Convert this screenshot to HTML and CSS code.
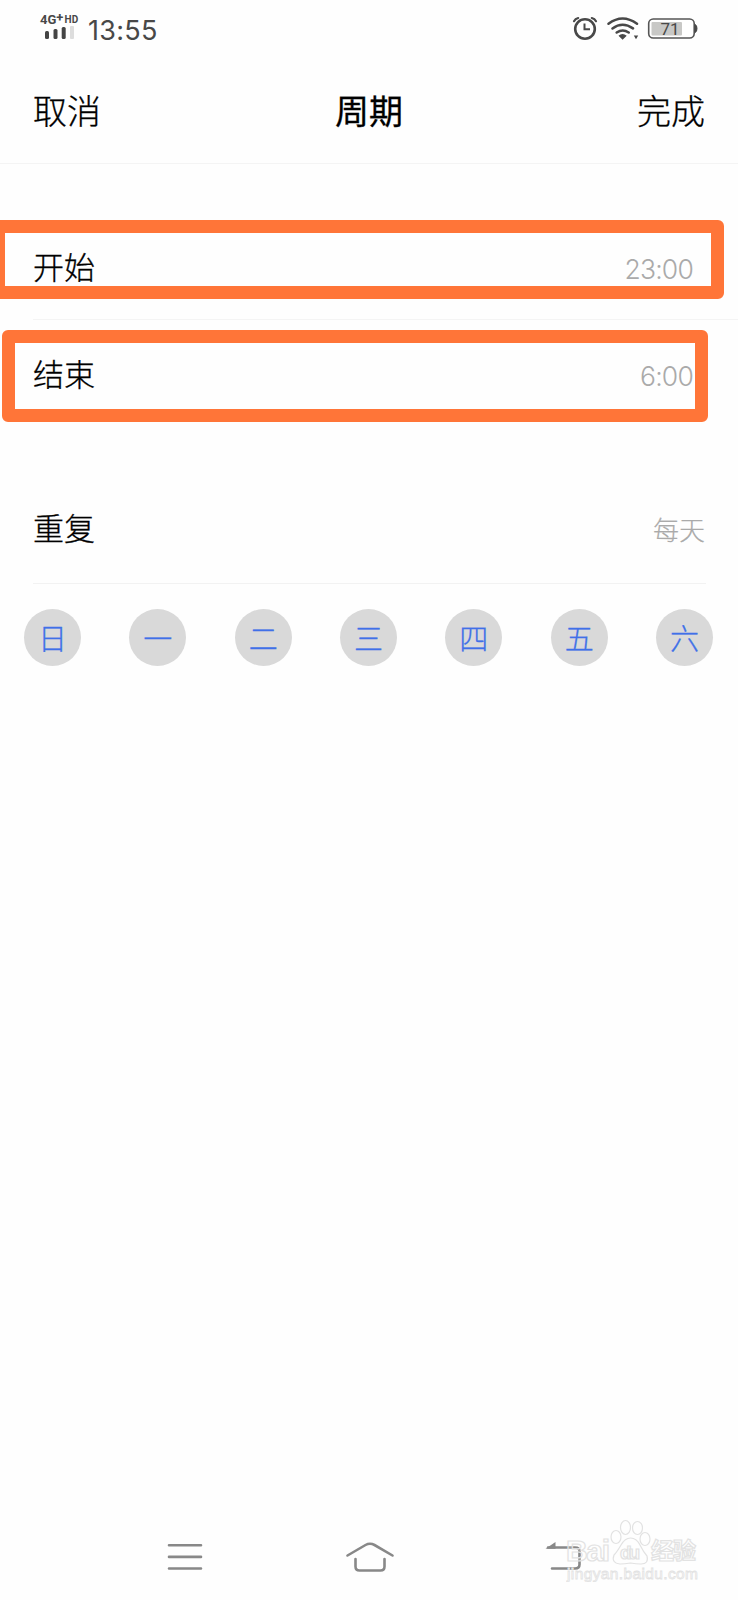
FILE: index.html
```html
<!DOCTYPE html>
<html lang="zh-CN">
<head>
    <meta charset="UTF-8">
    <meta name="viewport" content="width=device-width, initial-scale=1.0">
    <title>周期</title>
    <link rel="stylesheet" href="styles.css">
</head>
<body>
    <!-- Status bar -->
    <div class="status">
        <div class="network">
            <div class="network-type">4G<span class="plus">+</span><span class="hd">HD</span></div>
            <svg class="signal" width="30" height="13" viewBox="0 0 30 13">
                <rect x="0" y="5" width="4" height="8" rx="1.5" fill="#444"/>
                <rect x="8.5" y="3" width="4" height="10" rx="1.5" fill="#444"/>
                <rect x="16.7" y="1" width="4" height="12" rx="1.5" fill="#444"/>
                <rect x="25" y="0" width="4" height="13" rx="1" fill="#ddd"/>
            </svg>
        </div>
        <div class="time">13:55</div>
        <svg class="status-icons" width="130" height="28" viewBox="570 14 130 28">
            <g fill="none" stroke="#484848" stroke-linecap="round">
                <circle cx="585" cy="29" r="9.8" stroke-width="2.6"/>
                <path d="M584.5 23.5v5.7h5.5" stroke-width="2" stroke-linecap="butt"/>
                <path d="M574 21.2q1.3-2.5 4.2-3.2M596 21.2q-1.3-2.5-4.2-3.2" stroke-width="2.2"/>
                <path d="M608.5 23.7q14-10.5 28.5 0M612.5 28.4q10-7.2 20.5 0M616.7 32.5q6-4 12 0" stroke-width="2.5"/>
            </g>
            <path d="M618.5 35.8q4-3.6 8.2 0l-4.1 3.9zM633.8 35.5h4.4l-2.2 3.8z" fill="#484848"/>
            <rect x="648.7" y="19" width="45.5" height="19" rx="4.5" fill="#fff" stroke="#555" stroke-width="1.6"/>
            <rect x="651.5" y="22" width="30.5" height="13.5" rx="1" fill="#c8c8c6"/>
            <path d="M695 24.5q2 .5 2 4t-2 4z" fill="#484848" stroke="#484848"/>
            <text class="battery-text" x="670" y="35" text-anchor="middle">71</text>
        </svg>
    </div>

    <div class="header">
        <span>取消</span>
        <span class="title">周期</span>
        <span>完成</span>
    </div>

    <!-- Time period -->
    <div class="period">
        <div class="row start">
            <span>开始</span>
            <span class="value">23:00</span>
        </div>
        <div class="row end">
            <span>结束</span>
            <span class="value">6:00</span>
        </div>
        <div class="mark mark-start"></div>
        <div class="mark mark-end"></div>
    </div>

    <!-- Repeat days -->
    <div class="row repeat">
        <span>重复</span>
        <span class="repeat-value">每天</span>
    </div>
    <div class="days">
        <span class="day">日</span>
        <span class="day">一</span>
        <span class="day">二</span>
        <span class="day">三</span>
        <span class="day">四</span>
        <span class="day">五</span>
        <span class="day">六</span>
    </div>

    <!-- Navigation bar -->
    <div class="nav">
        <svg width="36" height="30" viewBox="0 0 36 30">
            <path d="M2 3.2h32M2 14.900h32M2 26.500h32"/>
        </svg>
        <svg class="home" width="50" height="32" viewBox="0 0 50 32">
            <path d="M2.5 14.500L20.500 4Q25 1.500 29.500 4L47.500 14.500M10.500 18v7.500q0 4 4 4h21q4 0 4-4v-7.500"/>
        </svg>
        <svg width="38" height="30" viewBox="0 0 38 30">
            <path d="M3 5.500h27q4.500 0 4.500 4v13q0 4-4.500 4H7"/>
            <path class="arrow" d="M.5 6.800l10-6.800v6.800z"/>
        </svg>
    </div>

    <div class="watermark">
        <svg width="136" height="64" viewBox="0 0 136 64">
            <g class="outline">
                <text class="logo" x="0" y="43" textLength="44">Bai</text>
                <ellipse cx="50" cy="19" rx="5" ry="6.500"/>
                <ellipse cx="59.500" cy="9.500" rx="5" ry="7"/>
                <ellipse cx="71.500" cy="10" rx="5" ry="6.500"/>
                <ellipse cx="79" cy="21" rx="5" ry="6.500"/>
                <path d="M64.500 20q6 0 9.500 7t7 11q2 8-6 8-5 0-10.500-1-6 1-10.500 1-9-1-6-9 3-3 7-10t9.500-7z"/>
                <text class="du" x="54" y="41" textLength="20">du</text>
                <text class="exp" x="85" y="41" textLength="45">经验</text>
            </g>
            <text class="site" x="1" y="60.500" textLength="131">jingyan.baidu.com</text>
        </svg>
    </div>
</body>
</html>
```

FILE: styles.css
```css
* {
    box-sizing: border-box;
}

body {
    margin: 0;
    height: 1600px;
    display: flex;
    flex-direction: column;
    position: relative;
    overflow: hidden;
    background-color: #fefefe;
    color: #000;
    font-family: "Noto Sans CJK SC", sans-serif;
    font-weight: 300;
    -webkit-text-stroke-width: 0.3px;
}

.status {
    height: 60px;
    display: flex;
    align-items: flex-start;
    padding: 14px 38px 0 40px;
    color: #484848;
    -webkit-text-stroke-width: 0;
}

.network {
    width: 48px;
}

.network-type {
    height: 12px;
    font: bold 13px/12px Roboto, sans-serif;
    white-space: nowrap;
}

.plus {
    position: relative;
    top: -2px;
}

.hd {
    font-size: 10px;
    position: relative;
    top: -1px;
    margin-left: 1px;
    letter-spacing: 0.3px;
}

.signal {
    display: block;
    margin: 0 0 0 5px;
}

.time {
    font: 400 27px/34px Inter, sans-serif;
    letter-spacing: 0.3px;
    flex: 1;
}

.battery-text {
    font: 400 17px Roboto, sans-serif;
    fill: #484848;
}

.header {
    height: 104px;
    display: flex;
    justify-content: space-between;
    align-items: center;
    padding: 0 33px 3px 33px;
    border-bottom: 1px solid #f4f4f4;
    font-size: 34px;
    line-height: 50px;
}

.title {
    font-weight: 400;
    -webkit-text-stroke-width: 0.3px;
}

.period {
    position: relative;
    margin-top: 52px;
}

.row {
    height: 110px;
    display: flex;
    justify-content: space-between;
    align-items: center;
    margin-left: 33px;
    padding-bottom: 4px;
    font-size: 31px;
    line-height: 46px;
}

.start {
    height: 104px;
    border-bottom: 1px solid #f4f4f4;
}

.value {
    margin: 6px 45px 0 0;
    color: #aaa;
    font: 300 26.5px/32px Inter, sans-serif;
    letter-spacing: -0.8px;
    -webkit-text-stroke-width: 0;
}

.mark {
    position: absolute;
    border: 13px solid #ff7538;
    border-radius: 6px;
}

.mark-start {
    left: -8px;
    top: 4px;
    width: 732px;
    height: 79px;
}

.mark-end {
    left: 2px;
    top: 114px;
    width: 706px;
    height: 92px;
}

.repeat {
    margin: 44px 32px 0 33px;
    border-bottom: 1px solid #f2f2f2;
}

.repeat-value {
    font-size: 26px;
    color: #aaa;
    padding: 4px 1px 0 0;
    -webkit-text-stroke-width: 0.2px;
}

.days {
    display: flex;
    justify-content: space-between;
    padding: 25px 25px 0 24px;
}

.day {
    width: 57px;
    height: 57px;
    display: flex;
    justify-content: center;
    align-items: center;
    padding-bottom: 2px;
    border-radius: 50%;
    background-color: #d9d9d9;
    color: #4070e8;
    font-size: 29px;
}

.nav {
    display: flex;
    justify-content: space-between;
    align-items: center;
    margin: auto 155px 27px 167px;
}

.nav svg {
    fill: none;
    stroke: #888;
    stroke-width: 2.6;
    stroke-linecap: round;
}

.nav .home {
    margin-right: 9px;
}

.nav .arrow {
    fill: #888;
    stroke: none;
}

.watermark {
    position: absolute;
    left: 566px;
    top: 1518px;
    font-family: "Liberation Sans", "Noto Sans CJK SC", sans-serif;
    -webkit-text-stroke-width: 0;
}

.watermark svg {
    display: block;
}

.outline {
    fill: #fefefe;
    fill-opacity: 0.2;
    stroke: #e2e2e2;
    stroke-width: 1.2;
}

.logo {
    font-size: 30px;
    font-weight: bold;
}

.du {
    font-size: 19px;
    font-weight: bold;
}

.exp {
    font-size: 23px;
    font-weight: bold;
}

.site {
    font-size: 15.5px;
    fill: #fefefe;
    stroke: #e2e2e2;
    stroke-width: 0.8;
}
```
